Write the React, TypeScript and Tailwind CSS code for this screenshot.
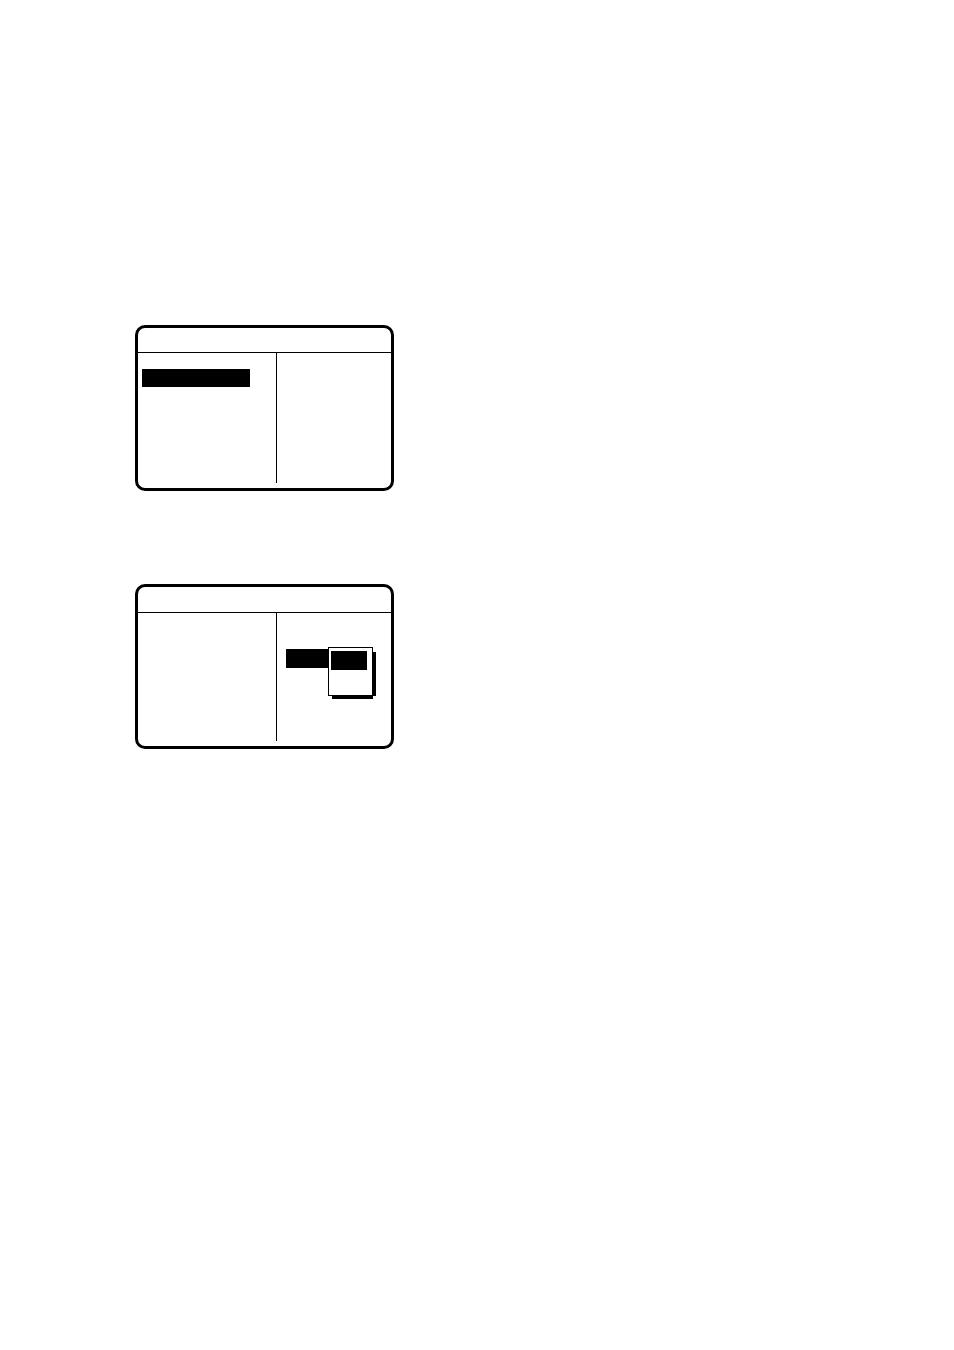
import React from "react";
import clsx from "clsx";

type ScreenProps = {
  className?: string;
  headerClassName?: string;
  left?: React.ReactNode;
  right?: React.ReactNode;
};

const Screen = ({ className, headerClassName, left, right }: ScreenProps) => {
  return (
    <section
      className={clsx(
        "flex w-full max-w-[259px] flex-col rounded-[10px] border-3 border-black bg-white",
        className
      )}
    >
      <header className={clsx("border-b border-black", headerClassName)} />
      <div className="flex flex-1 pb-[5px]">
        <div className="w-[138px] shrink-0 px-1 pt-4">{left}</div>
        <div className="flex-1 border-l border-black px-[9px] pt-9">{right}</div>
      </div>
    </section>
  );
};

const PopupMenu = () => {
  return (
    <div className="absolute -top-0.5 left-full h-[49px] w-[45px] border border-black bg-white px-0.5 pt-[3px]">
      <div className="h-[19px] w-9 bg-black" />
      {/* hard shadow, open at the lower right corner */}
      <span className="absolute top-1 -right-1 -bottom-px w-[3px] bg-black" />
      <span className="absolute -right-px -bottom-1 left-[3px] h-[3px] bg-black" />
    </div>
  );
};

const App = () => {
  return (
    <main className="flex min-h-screen flex-col gap-[93px] bg-white pt-[325px] pr-4 pl-[135px]">
      <Screen
        className="min-h-[166px]"
        headerClassName="h-[25px]"
        left={<div className="h-[18px] w-[108px] bg-black" />}
      />
      <Screen
        className="min-h-[165px]"
        headerClassName="h-[26px]"
        right={
          <div className="relative h-[19px] w-[42px] bg-black">
            <PopupMenu />
          </div>
        }
      />
    </main>
  );
};

export default App;
